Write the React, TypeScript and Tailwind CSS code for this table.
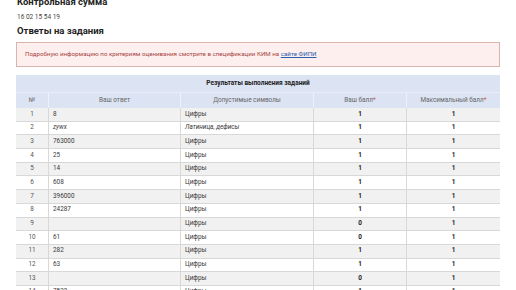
import React from 'react';

const rows: [string, string, string, string, string][] = [
  ['1', '8', 'Цифры', '1', '1'],
  ['2', 'zywx', 'Латиница, дефисы', '1', '1'],
  ['3', '763000', 'Цифры', '1', '1'],
  ['4', '25', 'Цифры', '1', '1'],
  ['5', '14', 'Цифры', '1', '1'],
  ['6', '608', 'Цифры', '1', '1'],
  ['7', '396000', 'Цифры', '1', '1'],
  ['8', '24287', 'Цифры', '1', '1'],
  ['9', '', 'Цифры', '0', '1'],
  ['10', '61', 'Цифры', '0', '1'],
  ['11', '282', 'Цифры', '1', '1'],
  ['12', '63', 'Цифры', '1', '1'],
  ['13', '', 'Цифры', '0', '1'],
  ['14', '7532', 'Цифры', '1', '1'],
];

const App = () => {
  return (
    <div className="w-[516px] h-[290px] overflow-hidden bg-white font-['Roboto',sans-serif] text-[#3a3a3a]">
      <div className="pl-[17px] pr-[16px] mt-[-4px]">
        <h2 className="text-[9.5px] leading-[12px] font-bold text-[#222]">Контрольная сумма</h2>
        <p className="mt-[4px] text-[6.5px] leading-[10px] text-[#444]">16 02 15 54 19</p>
        <h2 className="mt-[3px] text-[9.5px] leading-[12px] font-bold text-[#222]">Ответы на задания</h2>
      </div>

      <div className="ml-[16px] w-[484px] mt-[5px] h-[25px] flex items-center px-[8px] border border-[#d9b3ae] bg-[#fcefee] text-[6.2px] text-[#a94442]">
        <span>
          Подробную информацию по критериям оценивания смотрите в спецификации КИМ на{' '}
          <span className="text-[#2a5db0] underline">сайте ФИПИ</span>
        </span>
      </div>

      <div className="ml-[16px] w-[484px] mt-[8px]">
        <div className="h-[17px] flex items-center justify-center bg-[#dce3f3] text-[6.5px] font-bold text-[#222]">
          Результаты выполнения заданий
        </div>
        <div className="grid grid-cols-[32px_132px_133px_93px_94px] h-[16px] bg-[#dce3f3] border-t border-[#e8edf8] text-[6.4px] text-[#666]">
          <div className="flex items-center justify-center">№</div>
          <div className="flex items-center justify-center border-l border-[#eef1f9]">Ваш ответ</div>
          <div className="flex items-center justify-center border-l border-[#eef1f9]">Допустимые символы</div>
          <div className="flex items-center justify-center border-l border-[#eef1f9]">
            Ваш балл<span className="text-[#d9534f]">*</span>
          </div>
          <div className="flex items-center justify-center border-l border-[#eef1f9]">
            Максимальный балл<span className="text-[#d9534f]">*</span>
          </div>
        </div>
        {rows.map((r, i) => (
          <div
            key={r[0]}
            className={`grid grid-cols-[32px_132px_133px_93px_94px] h-[13.7px] border-b border-[#d8d8d8] text-[6.4px] ${
              i % 2 === 0 ? 'bg-[#f1f1f1]' : 'bg-white'
            }`}
          >
            <div className="flex items-center justify-center text-[#555]">{r[0]}</div>
            <div className={`flex items-center pl-[4px] border-l border-[#d8d8d8] ${r[0] === '2' ? 'italic' : ''}`}>{r[1]}</div>
            <div className={`flex items-center pl-[4px] border-l border-[#d8d8d8] ${r[0] === '2' ? 'italic' : ''}`}>{r[2]}</div>
            <div className="flex items-center justify-center border-l border-[#d8d8d8] font-bold text-[#222]">{r[3]}</div>
            <div className="flex items-center justify-center border-l border-[#d8d8d8] font-bold text-[#222]">{r[4]}</div>
          </div>
        ))}
      </div>
    </div>
  );
};

export default App;
